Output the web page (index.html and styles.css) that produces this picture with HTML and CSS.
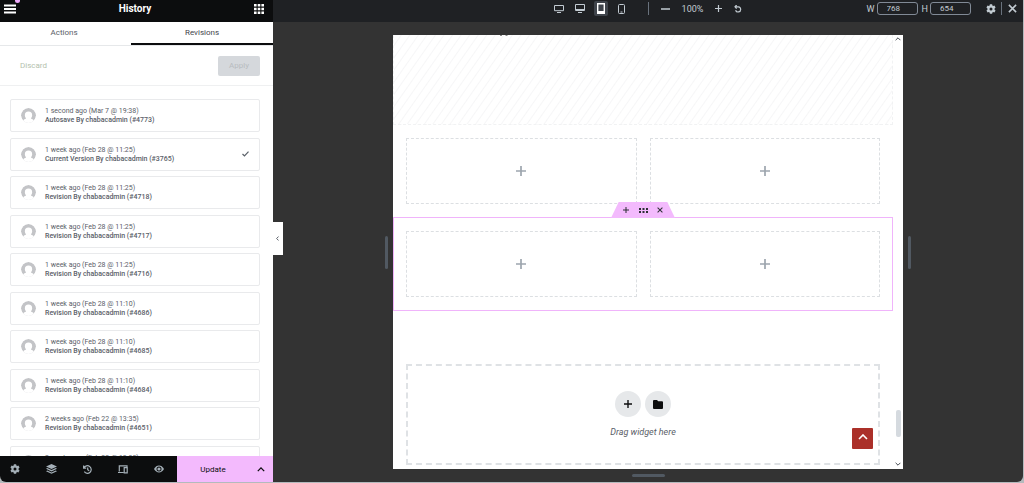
FILE: index.html
```html
<!DOCTYPE html>
<html lang="en">
<head>
<meta charset="utf-8"/>
<meta name="viewport" content="width=device-width, initial-scale=1.0"/>
<title>Editor - History</title>
<link rel="stylesheet" href="styles.css">
</head>
<body>
  <svg class="defs" aria-hidden="true">
    <symbol id="avatar" viewBox="0 0 16 16">
      <circle cx="8" cy="8" r="8" fill="#c3c4c7"/>
      <path d="M8 3.800a3.900 3.900 0 0 1 3.900 3.900c0 1.500-.6 2.600-1.400 3.400 1.400.4 2.400 1 3.100 1.900V16H2.400v-3c.7-.9 1.700-1.500 3.100-1.900-.8-.8-1.400-1.900-1.400-3.400A3.900 3.900 0 0 1 8 3.800z" fill="#fff"/>
    </symbol>
    <symbol id="gear" viewBox="0 0 16 16">
      <path fill="currentColor" fill-rule="evenodd" d="M6.200.5h3.600l.4 2 1.300.7 2-.7 1.800 3.100-1.600 1.400v2l1.600 1.400-1.800 3.100-2-.7-1.300.7-.4 2H6.200l-.4-2-1.300-.7-2 .7-1.800-3.100L2.300 9V7L.7 5.600l1.800-3.100 2 .7 1.300-.7zM8 5.600a2.400 2.400 0 1 0 0 4.800 2.400 2.400 0 0 0 0-4.800z"/>
    </symbol>
    <symbol id="plus" viewBox="0 0 10 10">
      <path d="M5 0v10M0 5h10" stroke="currentColor" stroke-width="1.700"/>
    </symbol>
    <symbol id="close" viewBox="0 0 10 10">
      <path d="M1 1l8 8M9 1l-8 8" stroke="currentColor" stroke-width="1.700"/>
    </symbol>
    <symbol id="chevron" viewBox="0 0 10 6">
      <path d="M1 5l4-4 4 4" fill="none" stroke="currentColor" stroke-width="1.600"/>
    </symbol>
  </svg>

  <div class="app">
    <aside class="panel">
      <header class="panel-header">
        <button class="icon-btn menu" aria-label="Menu">
          <svg width="12" height="10" viewBox="0 0 12 10"><path d="M0 1.500h12M0 5h12M0 8.500h12" stroke="currentColor" stroke-width="1.800"/></svg>
          <span class="dot"></span>
        </button>
        <h1>History</h1>
        <button class="icon-btn" aria-label="Widgets">
          <svg width="10" height="10" viewBox="0 0 10 10" fill="currentColor"><path d="M0 0h2.600v2.600H0zM3.700 0h2.600v2.600H3.700zM7.400 0H10v2.600H7.400zM0 3.700h2.600v2.600H0zM3.700 3.700h2.600v2.600H3.700zM7.400 3.700H10v2.600H7.400zM0 7.400h2.600V10H0zM3.700 7.400h2.600V10H3.700zM7.400 7.400H10V10H7.400z"/></svg>
        </button>
      </header>
      <nav class="tabs">
        <button class="tab">Actions</button>
        <button class="tab active">Revisions</button>
      </nav>
      <div class="actions">
        <button class="discard">Discard</button>
        <button class="apply" disabled>Apply</button>
      </div>
      <ul class="revisions">
        <li class="revision">
          <svg class="avatar"><use href="#avatar"/></svg>
          <div><p class="date">1 second ago (Mar 7 @ 19:38)</p><p class="meta">Autosave By chabacadmin (#4773)</p></div>
        </li>
        <li class="revision">
          <svg class="avatar"><use href="#avatar"/></svg>
          <div><p class="date">1 week ago (Feb 28 @ 11:25)</p><p class="meta">Current Version By chabacadmin (#3765)</p></div>
          <svg class="check" width="7" height="6" viewBox="0 0 7 6"><path d="M.5 3l2 2 4-4.300" fill="none" stroke="currentColor" stroke-width="1.200"/></svg>
        </li>
        <li class="revision">
          <svg class="avatar"><use href="#avatar"/></svg>
          <div><p class="date">1 week ago (Feb 28 @ 11:25)</p><p class="meta">Revision By chabacadmin (#4718)</p></div>
        </li>
        <li class="revision">
          <svg class="avatar"><use href="#avatar"/></svg>
          <div><p class="date">1 week ago (Feb 28 @ 11:25)</p><p class="meta">Revision By chabacadmin (#4717)</p></div>
        </li>
        <li class="revision">
          <svg class="avatar"><use href="#avatar"/></svg>
          <div><p class="date">1 week ago (Feb 28 @ 11:25)</p><p class="meta">Revision By chabacadmin (#4716)</p></div>
        </li>
        <li class="revision">
          <svg class="avatar"><use href="#avatar"/></svg>
          <div><p class="date">1 week ago (Feb 28 @ 11:10)</p><p class="meta">Revision By chabacadmin (#4686)</p></div>
        </li>
        <li class="revision">
          <svg class="avatar"><use href="#avatar"/></svg>
          <div><p class="date">1 week ago (Feb 28 @ 11:10)</p><p class="meta">Revision By chabacadmin (#4685)</p></div>
        </li>
        <li class="revision">
          <svg class="avatar"><use href="#avatar"/></svg>
          <div><p class="date">1 week ago (Feb 28 @ 11:10)</p><p class="meta">Revision By chabacadmin (#4684)</p></div>
        </li>
        <li class="revision">
          <svg class="avatar"><use href="#avatar"/></svg>
          <div><p class="date">2 weeks ago (Feb 22 @ 13:35)</p><p class="meta">Revision By chabacadmin (#4651)</p></div>
        </li>
        <li class="revision">
          <svg class="avatar"><use href="#avatar"/></svg>
          <div><p class="date">2 weeks ago (Feb 22 @ 13:35)</p><p class="meta"></p></div>
        </li>
      </ul>
      <footer class="panel-footer">
        <div class="tools">
          <button class="icon-btn" aria-label="Settings"><svg width="10" height="10"><use href="#gear"/></svg></button>
          <button class="icon-btn" aria-label="Navigator"><svg width="11" height="10" viewBox="0 0 11 10" fill="currentColor"><path d="M5.500 0L11 2.500 5.500 5 0 2.500zM1.300 4.100l4.200 1.900 4.200-1.900 1.300.7-5.500 2.600L0 4.800zM1.300 6.500l4.200 1.900 4.200-1.900 1.300.7L5.500 9.800 0 7.200z"/></svg></button>
          <button class="icon-btn" aria-label="History"><svg width="9" height="9" viewBox="0 0 9 9" fill="none" stroke="currentColor"><path d="M1 2.800A3.800 3.800 0 1 1 1.300 6.700M.6.500v2.600h2.600M4.700 2.500v2.300l1.500 1" stroke-width="1.200"/></svg></button>
          <button class="icon-btn" aria-label="Responsive mode"><svg width="10" height="9" viewBox="0 0 10 9" fill="none" stroke="currentColor"><path d="M9 2V.8H1.300v5.700M0 7.500h5.500M6.200 2.700h3v5.200h-3z" stroke-width="1.200"/></svg></button>
          <button class="icon-btn" aria-label="Preview"><svg width="10" height="8" viewBox="0 0 10 8"><path d="M0 4Q2 .6 5 .6T10 4Q8 7.400 5 7.400T0 4z" fill="currentColor"/><circle cx="5" cy="4" r="2.500" fill="#0c0d0e"/><circle cx="5" cy="4" r="1.600" fill="currentColor"/></svg></button>
        </div>
        <button class="update">Update</button>
        <button class="update-more" aria-label="Save options"><svg width="8" height="5"><use href="#chevron"/></svg></button>
      </footer>
      <button class="collapse" aria-label="Hide panel"><svg width="3" height="5" viewBox="0 0 3 5"><path d="M2.600.5l-2 2 2 2" fill="none" stroke="currentColor"/></svg></button>
    </aside>

    <main class="workspace">
      <header class="topbar">
        <div class="devices">
          <button class="icon-btn" aria-label="Widescreen"><svg width="10" height="8" viewBox="0 0 10 8" fill="none" stroke="currentColor"><path d="M.5.5h9v5.200h-9zM3 7.500h4"/></svg></button>
          <button class="icon-btn" aria-label="Desktop"><svg width="10" height="9" viewBox="0 0 10 9" fill="none" stroke="currentColor"><path d="M.5.500h9v6h-9zM.5 5.500h9M3 8.500h4"/></svg></button>
          <button class="icon-btn active" aria-label="Tablet"><svg width="8" height="11" viewBox="0 0 8 11" fill="none" stroke="currentColor"><path d="M.7.7h6.600v9.600H.7zM.7 8.800h6.600" stroke-width="1.400"/></svg></button>
          <button class="icon-btn" aria-label="Mobile"><svg width="7" height="10" viewBox="0 0 7 10" fill="none" stroke="currentColor"><rect x=".5" y=".5" width="6" height="9" rx="1"/><path d="M2.500 8h2"/></svg></button>
        </div>
        <div class="zoom">
          <button class="icon-btn" aria-label="Zoom out"><svg width="9" height="2"><path d="M0 1h9" stroke="currentColor" stroke-width="1.500"/></svg></button>
          <span class="zoom-value">100%</span>
          <button class="icon-btn" aria-label="Zoom in"><svg width="7" height="7"><use href="#plus"/></svg></button>
          <button class="icon-btn" aria-label="Reset zoom"><svg width="8" height="8" viewBox="0 0 8 8" fill="none" stroke="currentColor"><path d="M1 1.800h3.400a2.600 2.600 0 1 1-2.800 3.400M2.600 0L1 1.800l1.600 1.800" stroke-width="1.200"/></svg></button>
        </div>
        <div class="size">
          <label for="width">W</label><input id="width" type="text" value="768">
          <label for="height">H</label><input id="height" type="text" value="654">
          <button class="icon-btn settings" aria-label="Breakpoints"><svg width="10" height="10"><use href="#gear"/></svg></button>
          <button class="icon-btn exit" aria-label="Close"><svg width="9" height="9"><use href="#close"/></svg></button>
        </div>
      </header>

      <div class="stage">
        <div class="viewport">
          <span class="handle side"></span>
          <div class="frame">
            <div class="page">
              <section class="hatched">
                <svg width="10" height="2" viewBox="0 0 10 2"><path d="M1 .5h2M6.500 .5h2" stroke="#888"/></svg>
              </section>
              <section class="columns">
                <div class="column"><svg width="10" height="10"><use href="#plus"/></svg></div>
                <div class="column"><svg width="10" height="10"><use href="#plus"/></svg></div>
              </section>
              <section class="columns selected">
                <div class="section-menu">
                  <button class="icon-btn" aria-label="Add section"><svg width="6" height="6"><use href="#plus"/></svg></button>
                  <button class="icon-btn" aria-label="Edit section"><svg width="9" height="5" viewBox="0 0 9 5" fill="currentColor"><path d="M0 0h2v2H0zM3.500 0h2v2h-2zM7 0h2v2H7zM0 3h2v2H0zM3.500 3h2v2h-2zM7 3h2v2H7z"/></svg></button>
                  <button class="icon-btn" aria-label="Delete section"><svg width="6" height="6"><use href="#close"/></svg></button>
                </div>
                <div class="column"><svg width="10" height="10"><use href="#plus"/></svg></div>
                <div class="column"><svg width="10" height="10"><use href="#plus"/></svg></div>
              </section>
              <section class="drop-area">
                <div class="drop-buttons">
                  <button class="round" aria-label="Add new container"><svg width="8" height="8"><use href="#plus"/></svg></button>
                  <button class="round" aria-label="Add template"><svg width="10" height="9" viewBox="0 0 10 9"><path d="M1 0h3l1.200 1.300H9a1 1 0 0 1 1 1V8a1 1 0 0 1-1 1H1a1 1 0 0 1-1-1V1a1 1 0 0 1 1-1z" fill="currentColor"/></svg></button>
                </div>
                <p>Drag widget here</p>
              </section>
              <a class="to-top" href="#" aria-label="Back to top"><svg width="10" height="6"><use href="#chevron"/></svg></a>
            </div>
            <div class="scrollbar">
              <svg width="6" height="4"><use href="#chevron"/></svg>
              <span class="thumb"></span>
              <svg class="down" width="6" height="4"><use href="#chevron"/></svg>
            </div>
          </div>
          <span class="handle side"></span>
        </div>
        <span class="handle bottom"></span>
      </div>
    </main>
  </div>
</body>
</html>
```
FILE: styles.css
```css
* {
  box-sizing: border-box;
}
body {
  margin: 0;
  background: #b4babd;
  font-family: Roboto, sans-serif;
  font-size: 8px;
  color: #5a6068;
}
h1, p, ul {
  margin: 0;
  padding: 0;
}
button {
  font-family: inherit;
  font-size: inherit;
  color: inherit;
  border: none;
  background: none;
  padding: 0;
  cursor: pointer;
}
svg {
  display: block;
}
.defs {
  display: none;
}
.icon-btn {
  display: flex;
  align-items: center;
  justify-content: center;
}
.app {
  display: flex;
  height: calc(100vh - 1px);
  margin-right: 1px;
  background: #333;
  border-radius: 0 0 6px 6px;
  overflow: hidden;
}

/* left panel */
.panel {
  position: relative;
  display: flex;
  flex-direction: column;
  flex: 0 0 273px;
  background: #fff;
}
.panel-header {
  display: flex;
  align-items: center;
  justify-content: space-between;
  height: 22px;
  padding: 0 9px 5px 4px;
  background: #0c0d0e;
  color: #fff;
}
.panel-header h1 {
  font-size: 10px;
  font-weight: bold;
}
.menu {
  position: relative;
}
.dot {
  position: absolute;
  top: -6px;
  right: -4px;
  width: 5px;
  height: 5px;
  border-radius: 50%;
  background: #f0abfc;
}
.tabs {
  display: flex;
  height: 24px;
  border-bottom: 1px solid #e6e8ea;
}
.tab {
  flex: 0 0 48%;
  padding: 0 3px 2px 0;
  font-size: 8px;
}
.tab.active {
  flex: 1;
  padding: 0;
  color: #3f444b;
  border-bottom: 2px solid #0c0d0e;
}
.actions {
  display: flex;
  align-items: center;
  justify-content: space-between;
  height: 40px;
  padding: 0 13px 0 20px;
  border-bottom: 1px solid #eff0f1;
}
.discard {
  color: #b4bfae;
}
.apply {
  width: 42px;
  height: 20px;
  border-radius: 2px;
  background: #d5d8dc;
  color: #b8bcc0;
}
.revisions {
  flex: 1;
  min-height: 0;
  overflow: hidden;
  padding: 13px 13px 0 10px;
  list-style: none;
}
.revision {
  display: flex;
  align-items: center;
  height: 33px;
  margin-bottom: 5px;
  padding: 0 10px 1px;
  border: 1px solid #e9eaec;
  border-radius: 2px;
}
.revision:nth-child(odd) {
  margin-bottom: 6px;
}
.avatar {
  width: 15px;
  height: 15px;
  margin-right: 9px;
  border-radius: 50%;
}
.date {
  font-size: 7px;
  line-height: 10px;
}
.meta {
  min-height: 9px;
  font-size: 7px;
  line-height: 9px;
  font-weight: 500;
}
.check {
  margin-left: auto;
}
.panel-footer {
  display: flex;
  height: 26px;
  background: #0c0d0e;
}
.tools {
  display: flex;
  flex: 1;
  align-items: center;
  justify-content: space-between;
  padding: 0 13px 0 10px;
  color: #a4afb7;
}
.update, .update-more {
  background: #f3bafd;
  color: #0c0d0e;
}
.update {
  width: 72px;
}
.update-more {
  width: 24px;
  padding-left: 8px;
}
.collapse {
  position: absolute;
  top: 222px;
  left: 100%;
  width: 10px;
  height: 33px;
  padding-left: 3px;
  background: #fff;
}

/* right side */
.workspace {
  display: flex;
  flex: 1;
  flex-direction: column;
  min-width: 0;
}
.topbar {
  display: grid;
  grid-template-columns: 1fr auto auto 1fr;
  height: 22px;
  padding: 0 6px 5px 4px;
  background: #1f2124;
  color: #c2cbd2;
}
.devices {
  display: flex;
  grid-column: 2;
  align-items: center;
  gap: 7px;
  padding-right: 19px;
}
.devices .icon-btn {
  width: 14px;
  height: 15px;
}
.devices .active {
  border-radius: 2px;
  background: #3f444b;
  color: #fff;
}
.zoom {
  display: flex;
  align-items: center;
  gap: 12px;
  margin: 2px 0;
  padding-left: 12px;
  border-left: 1px solid #69727d;
}
.zoom-value {
  font-size: 9px;
}
.size {
  display: flex;
  align-items: center;
  justify-content: flex-end;
}
.size label {
  font-size: 9px;
}
.size input {
  width: 41px;
  height: 13px;
  margin: 0 4px 0 2px;
  padding: 0 9px;
  border: 1px solid #818a96;
  border-radius: 3px;
  background: none;
  font: inherit;
  color: inherit;
}
.settings {
  margin: 0 5px 0 11px;
}
.exit {
  height: 13px;
  padding-left: 6px;
  border-left: 1px solid #69727d;
}
.stage {
  display: flex;
  flex: 1;
  flex-direction: column;
  align-items: center;
  gap: 5px;
  min-height: 0;
  padding: 13px 0 5px;
}
.viewport {
  display: flex;
  flex: 1;
  align-items: center;
  justify-content: center;
  gap: 5px;
  width: 100%;
  min-height: 0;
}
.handle {
  border-radius: 2px;
  background: #515962;
}
.side {
  width: 3px;
  height: 33px;
}
.bottom {
  width: 33px;
  height: 3px;
}
.frame {
  display: flex;
  width: 68%;
  height: 100%;
  background: #fff;
}
.page {
  position: relative;
  flex: 1;
}
.hatched {
  height: 90px;
  padding-left: 105px;
  border: 1px dashed #f1f2f3;
  border-top: none;
  background: repeating-linear-gradient(125deg, #fff 0, #fff 5px, #f6f6f7 6px, #fff 7px);
}
.columns {
  position: relative;
  display: flex;
  gap: 13px;
  padding: 13px;
}
.column {
  display: flex;
  flex: 1;
  align-items: center;
  justify-content: center;
  height: 66px;
  border: 1px dashed #dcdfe2;
  color: #9da5ae;
}
.selected {
  padding: 13px 12px;
  border: 1px solid #f0b4fb;
}
.section-menu {
  position: absolute;
  bottom: 100%;
  left: 50%;
  display: flex;
  align-items: center;
  justify-content: space-between;
  width: 64px;
  height: 16px;
  padding: 0 12px;
  transform: translateX(-50%);
  background: #f3bafd;
  clip-path: polygon(12% 0, 88% 0, 100% 100%, 0 100%);
  color: #2d3035;
}
.drop-area {
  display: flex;
  flex-direction: column;
  align-items: center;
  height: 101px;
  margin: 53px 13px 0;
  padding-top: 25px;
  border: 2px dashed #dfe2e5;
  font-size: 9px;
  font-style: italic;
}
.drop-buttons {
  display: flex;
  gap: 4px;
  margin-bottom: 10px;
}
.round {
  display: flex;
  align-items: center;
  justify-content: center;
  width: 26px;
  height: 26px;
  border-radius: 50%;
  background: #e6e8ea;
  color: #0c0d0e;
}
.to-top {
  position: absolute;
  right: 20px;
  bottom: 20px;
  display: flex;
  justify-content: center;
  width: 21px;
  height: 21px;
  padding-top: 6px;
  border-radius: 1px;
  background: #ab3029;
  color: #fff;
}
.scrollbar {
  display: flex;
  flex-direction: column;
  align-items: center;
  width: 10px;
  padding: 2px 0 3px;
  color: #3f444b;
}
.thumb {
  width: 5px;
  height: 27px;
  margin: auto 0 25px;
  border-radius: 2px;
  background: #d5dadf;
}
.down {
  transform: rotate(180deg);
}
```
